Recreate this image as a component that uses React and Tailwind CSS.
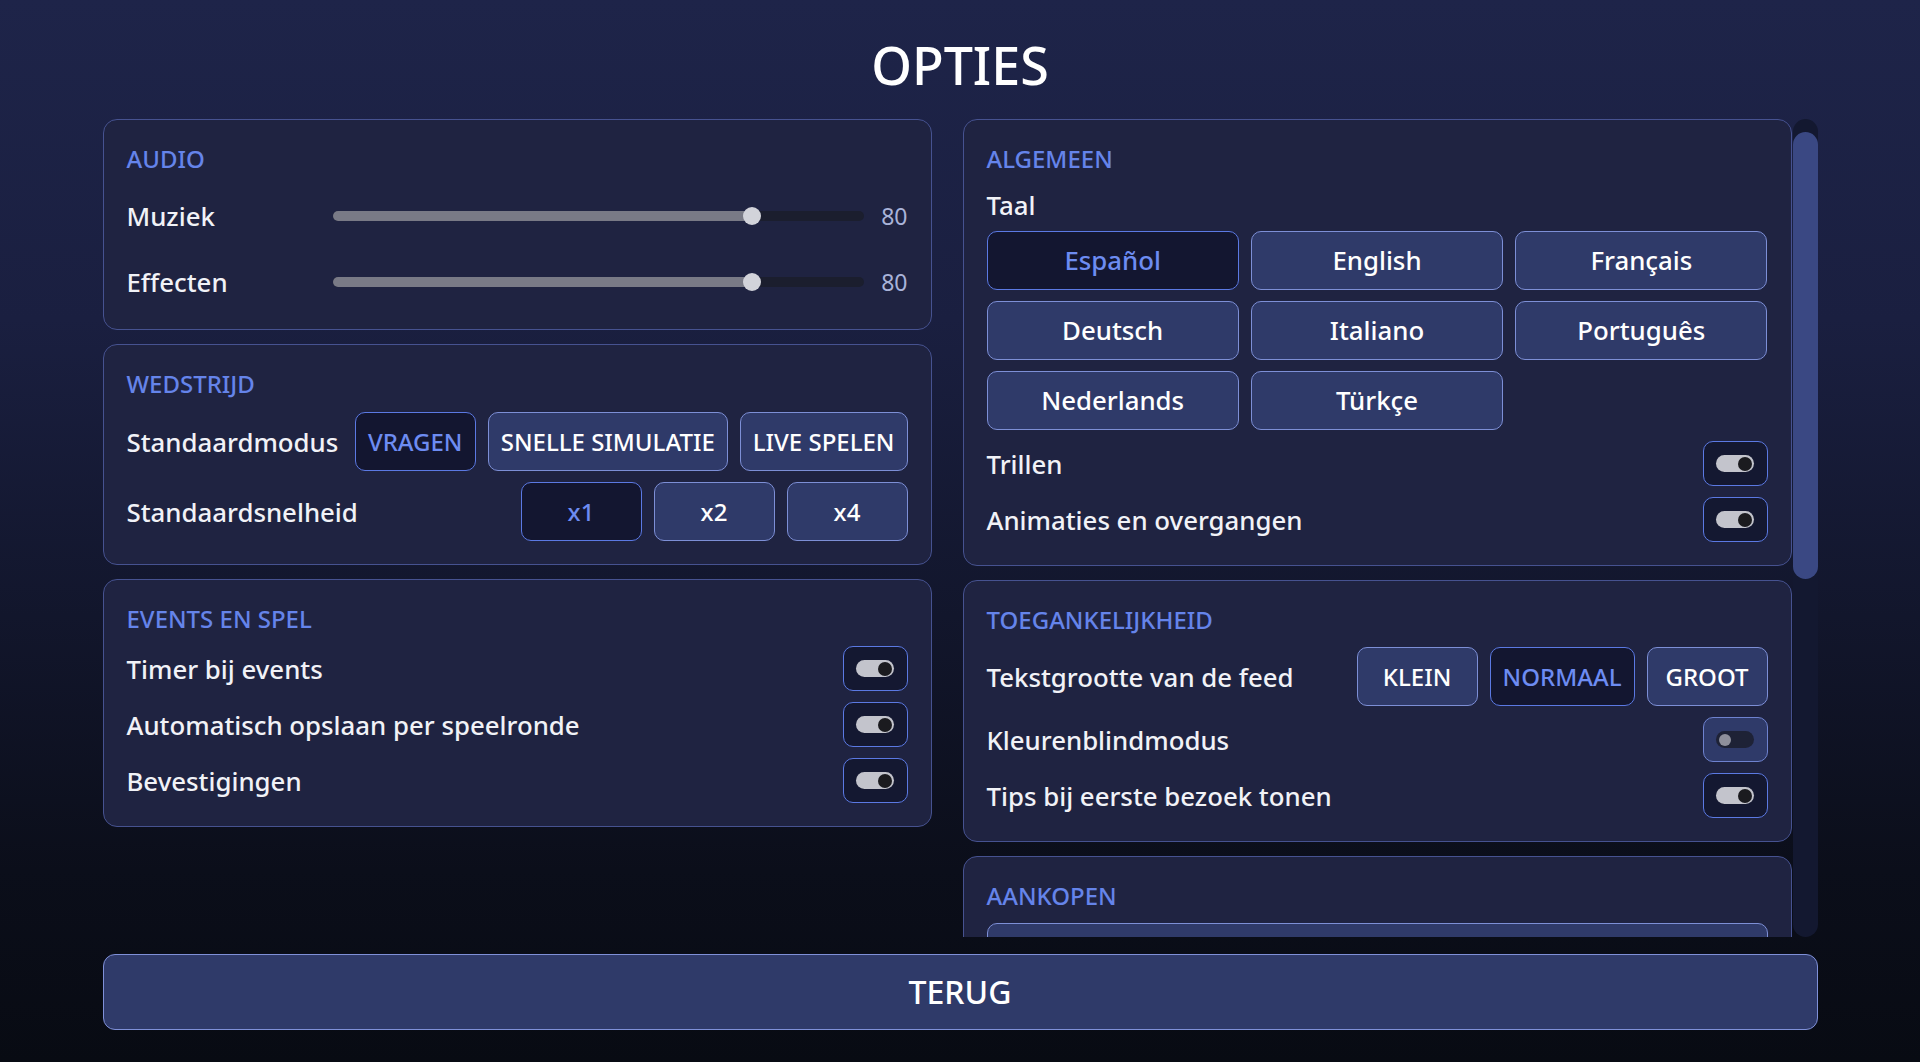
import React, { useState } from 'react';

const LANGS = ['Español', 'English', 'Français', 'Deutsch', 'Italiano', 'Português', 'Nederlands', 'Türkçe'];

function Card({ title, children }) {
  return (
    <section className="rounded-[14px] border border-[#465290] bg-[#1f2341] p-[23px]">
      <h2 className="text-[24px] leading-[32px] font-medium text-[#6584ea]">{title}</h2>
      {children}
    </section>
  );
}

function Toggle({ on }) {
  return (
    <button
      className={
        on
          ? 'flex h-[45px] w-[65px] shrink-0 items-center justify-center rounded-[10px] border border-[#5b79e3] bg-[#141831]'
          : 'flex h-[45px] w-[65px] shrink-0 items-center justify-center rounded-[10px] border border-[#6e82cf] bg-[#2f3a69]'
      }
    >
      <span
        className={
          on
            ? 'flex h-[17px] w-[38px] items-center justify-end rounded-full bg-[#c3c4cc] px-[2px]'
            : 'flex h-[17px] w-[38px] items-center justify-start rounded-full bg-[#1e2236] px-[3px]'
        }
      >
        <span className={on ? 'h-[14px] w-[14px] rounded-full bg-[#1b1b1f]' : 'h-[12px] w-[12px] rounded-full bg-[#8e8f9b]'} />
      </span>
    </button>
  );
}

function Seg({ active, children, onClick }) {
  return (
    <button
      onClick={onClick}
      className={
        active
          ? 'h-[59px] min-w-[121px] rounded-[10px] border border-[#5b79e3] bg-[#131630] px-3 text-[24px] font-medium text-[#6d8cf2]'
          : 'h-[59px] min-w-[121px] rounded-[10px] border border-[#7d8fd6] bg-[#2f3a69] px-3 text-[24px] font-medium text-white'
      }
    >
      {children}
    </button>
  );
}

function ToggleRow({ label, on }) {
  return (
    <div className="flex h-[45px] items-center justify-between">
      <span className="text-[25.8px] leading-[32px] font-medium text-[#f1f2f7]">{label}</span>
      <Toggle on={on} />
    </div>
  );
}

function Slider({ label, value }) {
  return (
    <div className="flex h-[48px] items-center">
      <span className="w-[206px] text-[25.8px] leading-[32px] font-medium text-[#f1f2f7]">{label}</span>
      <div className="relative h-[10px] flex-1 rounded-full bg-[#1b1e2e]">
        <div className="h-full rounded-full bg-[#797a86]" style={{ width: `${value - 1}%` }} />
        <span
          className="absolute top-1/2 h-[18px] w-[18px] -translate-x-1/2 -translate-y-1/2 rounded-full bg-[#d2d3da]"
          style={{ left: `${value - 1}%` }}
        />
      </div>
      <span className="w-[44px] text-right text-[23px] text-[#a9b3d9]">{value}</span>
    </div>
  );
}

export default function App() {
  const [mode, setMode] = useState('VRAGEN');
  const [speed, setSpeed] = useState('x1');
  const [lang, setLang] = useState('Español');
  const [size, setSize] = useState('NORMAAL');

  return (
    <div className="flex h-screen flex-col items-center overflow-hidden bg-[linear-gradient(to_bottom,#1e2449_0%,#1a1f40_30%,#12162c_58%,#0b0e1a_82%,#080b13_100%)] pt-[33px] font-['Noto_Sans',sans-serif] text-white">
      <h1 className="h-[64px] text-[52px] leading-[64px] font-medium">OPTIES</h1>

      <div className="mt-[22px] flex h-[818px] w-[1715px]">
        <div className="grid flex-1 grid-cols-2 items-start gap-x-[31px] overflow-hidden">
          <div className="flex flex-col gap-[14px]">
            <Card title="AUDIO">
              <div className="mt-[17px] flex flex-col gap-[18px]">
                <Slider label="Muziek" value={80} />
                <Slider label="Effecten" value={80} />
              </div>
            </Card>

            <Card title="WEDSTRIJD">
              <div className="mt-3 flex flex-col gap-[11px]">
                <div className="flex items-center justify-between">
                  <span className="text-[25.8px] leading-[32px] font-medium text-[#f1f2f7]">Standaardmodus</span>
                  <div className="flex gap-3">
                    {['VRAGEN', 'SNELLE SIMULATIE', 'LIVE SPELEN'].map((m) => (
                      <Seg key={m} active={mode === m} onClick={() => setMode(m)}>{m}</Seg>
                    ))}
                  </div>
                </div>
                <div className="flex items-center justify-between">
                  <span className="text-[25.8px] leading-[32px] font-medium text-[#f1f2f7]">Standaardsnelheid</span>
                  <div className="flex gap-3">
                    {['x1', 'x2', 'x4'].map((s) => (
                      <Seg key={s} active={speed === s} onClick={() => setSpeed(s)}>{s}</Seg>
                    ))}
                  </div>
                </div>
              </div>
            </Card>

            <Card title="EVENTS EN SPEL">
              <div className="mt-[11px] flex flex-col gap-[11px]">
                <ToggleRow label="Timer bij events" on />
                <ToggleRow label="Automatisch opslaan per speelronde" on />
                <ToggleRow label="Bevestigingen" on />
              </div>
            </Card>
          </div>

          <div className="flex flex-col gap-[14px]">
            <Card title="ALGEMEEN">
              <p className="mt-[14px] text-[25.8px] leading-[32px] font-medium text-[#f1f2f7]">Taal</p>
              <div className="mt-[10px] grid grid-cols-3 gap-x-3 gap-y-[11px]">
                {LANGS.map((l) => (
                  <button
                    key={l}
                    onClick={() => setLang(l)}
                    className={
                      lang === l
                        ? 'h-[59px] rounded-[10px] border border-[#5b79e3] bg-[#131630] text-[25.8px] font-medium text-[#6d8cf2]'
                        : 'h-[59px] rounded-[10px] border border-[#7d8fd6] bg-[#2f3a69] text-[25.8px] font-medium text-white'
                    }
                  >
                    {l}
                  </button>
                ))}
              </div>
              <div className="mt-[11px] flex flex-col gap-[11px]">
                <ToggleRow label="Trillen" on />
                <ToggleRow label="Animaties en overgangen" on />
              </div>
            </Card>

            <Card title="TOEGANKELIJKHEID">
              <div className="mt-[11px] flex flex-col gap-[11px]">
                <div className="flex items-center justify-between">
                  <span className="text-[25.8px] leading-[32px] font-medium text-[#f1f2f7]">Tekstgrootte van de feed</span>
                  <div className="flex gap-3">
                    {['KLEIN', 'NORMAAL', 'GROOT'].map((s) => (
                      <Seg key={s} active={size === s} onClick={() => setSize(s)}>{s}</Seg>
                    ))}
                  </div>
                </div>
                <ToggleRow label="Kleurenblindmodus" on={false} />
                <ToggleRow label="Tips bij eerste bezoek tonen" on />
              </div>
            </Card>

            <Card title="AANKOPEN">
              <div className="mt-[11px] flex flex-col gap-[11px]">
                <button aria-label="Aankopen herstellen" className="h-[59px] w-full rounded-[10px] border border-[#7d8fd6] bg-[#2f3a69]" />
                <button aria-label="Reclame verwijderen" className="h-[59px] w-full rounded-[10px] border border-[#7d8fd6] bg-[#2f3a69]" />
              </div>
            </Card>
          </div>
        </div>

        <div className="ml-px flex h-full w-[25px] flex-col rounded-full bg-[#131830]">
          <div className="mt-[13px] h-[447px] w-full rounded-full bg-[#3a4883]" />
        </div>
      </div>

      <button className="mt-[17px] h-[76px] w-[1715px] rounded-[12px] border border-[#7f90d8] bg-[#2f3a69] text-[32px] font-medium text-white">
        TERUG
      </button>
    </div>
  );
}
